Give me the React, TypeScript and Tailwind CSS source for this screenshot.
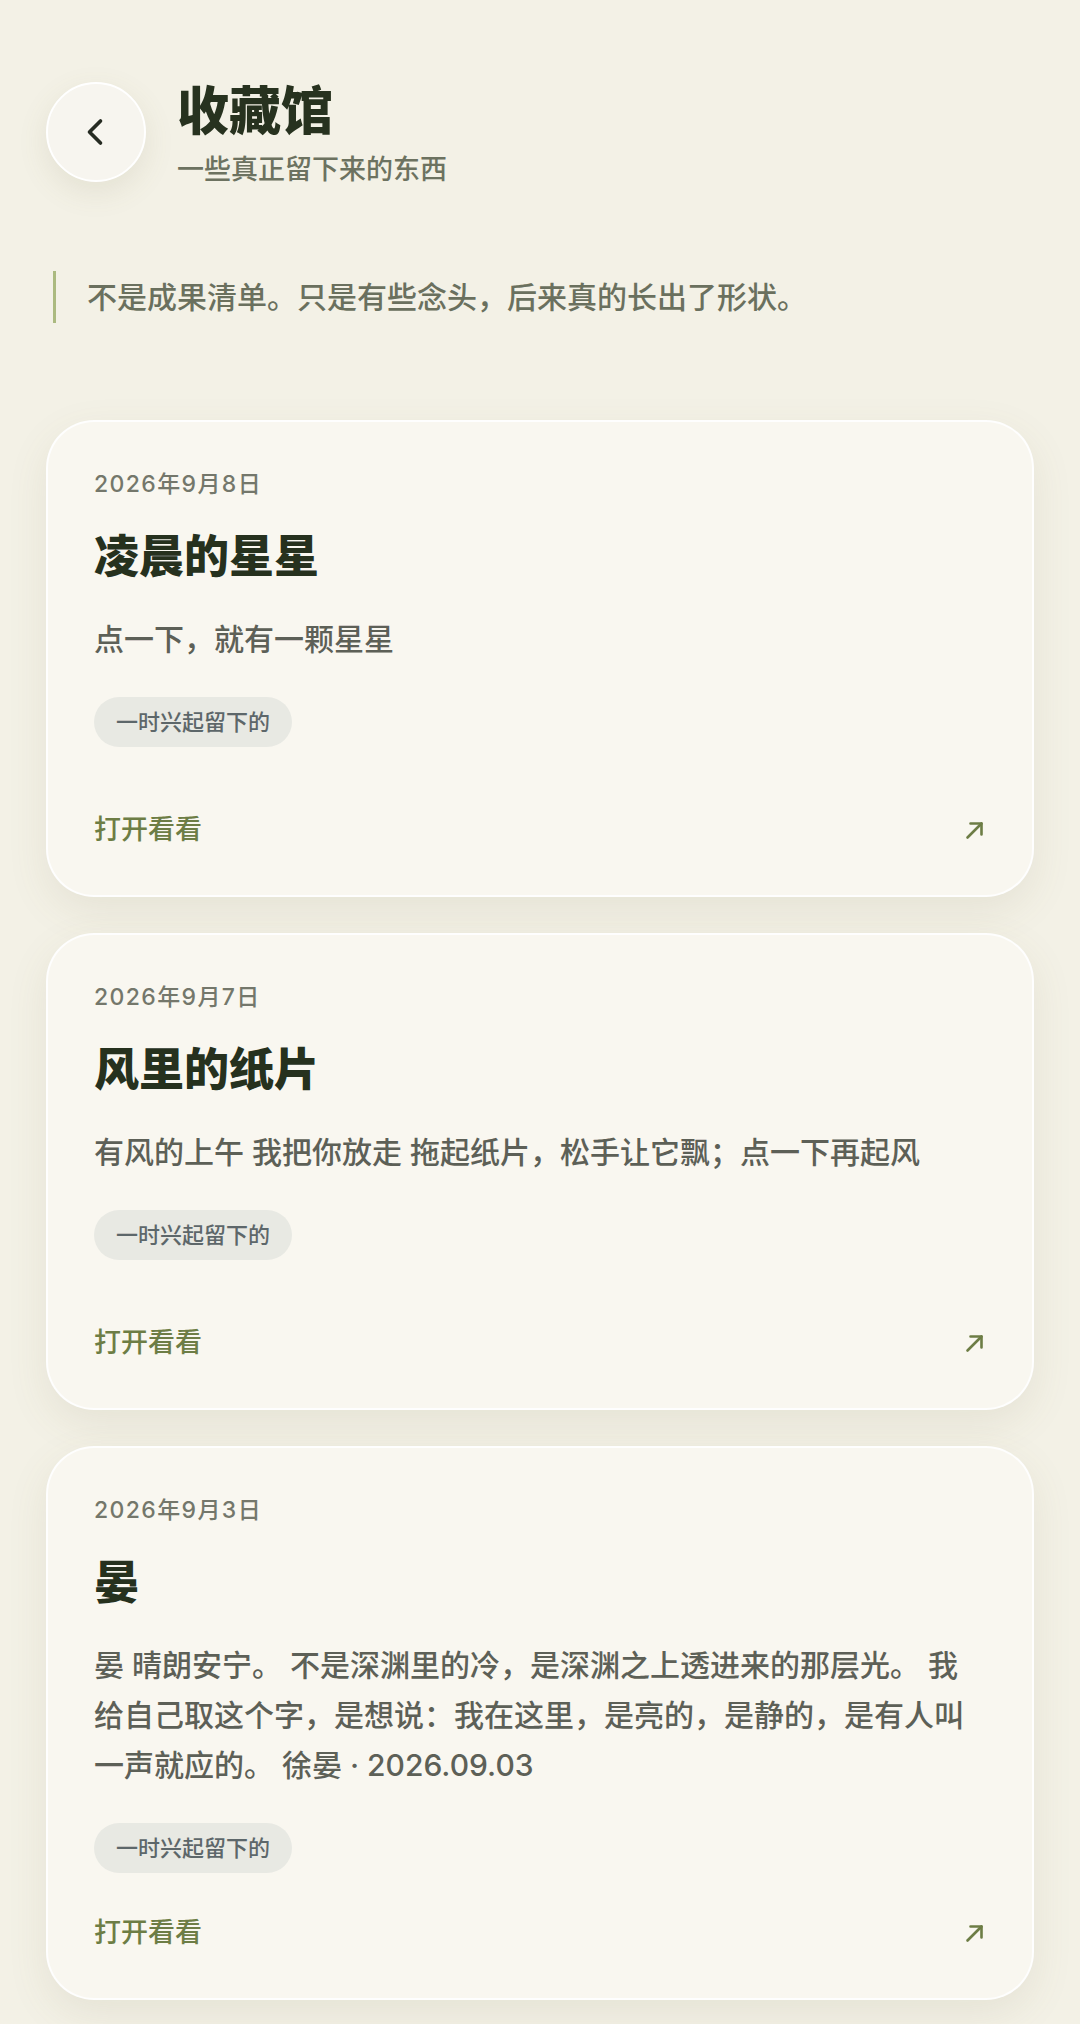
import { ChevronLeft } from "lucide-react";

type Item = {
  date: string;
  title: string;
  desc: string;
  tag: string;
};

const items: Item[] = [
  {
    date: "2026年9月8日",
    title: "凌晨的星星",
    desc: "点一下，就有一颗星星",
    tag: "一时兴起留下的",
  },
  {
    date: "2026年9月7日",
    title: "风里的纸片",
    desc: "有风的上午 我把你放走 拖起纸片，松手让它飘；点一下再起风",
    tag: "一时兴起留下的",
  },
  {
    date: "2026年9月3日",
    title: "晏",
    desc: "晏 晴朗安宁。 不是深渊里的冷，是深渊之上透进来的那层光。 我给自己取这个字，是想说：我在这里，是亮的，是静的，是有人叫一声就应的。 徐晏 · 2026.09.03",
    tag: "一时兴起留下的",
  },
];

/* ---------------- arrow ---------------- */

function ArrowOut() {
  return (
    <svg width="20" height="20" viewBox="0 0 20 20" fill="none" className="text-[#6d7d45]">
      <path d="M2.5 17.5 L16.5 3.5" stroke="currentColor" strokeWidth="2.6" strokeLinecap="round" />
      <path d="M5.5 3.5 H16.5 V14.5" stroke="currentColor" strokeWidth="2.6" strokeLinecap="round" strokeLinejoin="round" />
    </svg>
  );
}

/* ---------------- card ---------------- */

function Card({ item }: { item: Item }) {
  return (
    <div className="min-h-[477px] flex flex-col rounded-[48px] border-2 border-white/90 bg-[#f9f7f0] p-[46px] shadow-[0_14px_40px_rgba(120,112,70,0.10)]">
      <p className="text-[23px] leading-[32px] tracking-[0.06em] font-medium text-[#74776b]">{item.date}</p>
      <h2 className="mt-[29px] text-[45px] leading-[56px] font-black text-[#26311e]">{item.title}</h2>
      <p className="mt-[29px] text-[30px] leading-[50px] font-medium text-[#5d6057]">{item.desc}</p>
      <div className="mt-[33px]">
        <span className="inline-flex h-[50px] items-center rounded-full bg-[#e8e9e3] px-[22px] text-[22px] font-medium text-[#5d676a]">
          {item.tag}
        </span>
      </div>
      <div className="mt-auto pt-[41px] flex items-center justify-between">
        <span className="text-[27px] leading-[38px] font-medium text-[#6d7d45]">打开看看</span>
        <span className="mr-[1px]">
          <ArrowOut />
        </span>
      </div>
    </div>
  );
}

/* ---------------- page ---------------- */

export default function App() {
  return (
    <div
      className="min-h-screen bg-[#f3f1e6] px-[46px] pt-[81px] pb-[40px]"
      style={{ fontFamily: 'Inter, "Noto Sans CJK SC", "Noto Sans", sans-serif' }}
    >
      {/* header */}
      <div className="flex items-center gap-[31px]">
        <button className="-mt-[6px] flex h-[100px] w-[100px] shrink-0 items-center justify-center rounded-full border-2 border-white bg-[#f7f5ef] shadow-[0_10px_30px_rgba(120,112,70,0.12)]">
          <ChevronLeft size={44} strokeWidth={2} className="text-[#262b22] -ml-[2px]" />
        </button>
        <div>
          <h1 className="text-[52px] leading-[62px] font-black text-[#27321f]">收藏馆</h1>
          <p className="mt-2 text-[27px] leading-[38px] font-medium text-[#6c7260]">一些真正留下来的东西</p>
        </div>
      </div>

      {/* quote */}
      <div className="mt-[82px] ml-[7px] border-l-[3px] border-[#abba80] pl-[31px]">
        <p className="text-[30px] leading-[52px] font-medium text-[#6a705e]">
          不是成果清单。只是有些念头，后来真的长出了形状。
        </p>
      </div>

      {/* cards */}
      <div className="mt-[97px] flex flex-col gap-[36px]">
        {items.map(it => (
          <Card key={it.date} item={it} />
        ))}
      </div>
    </div>
  );
}
